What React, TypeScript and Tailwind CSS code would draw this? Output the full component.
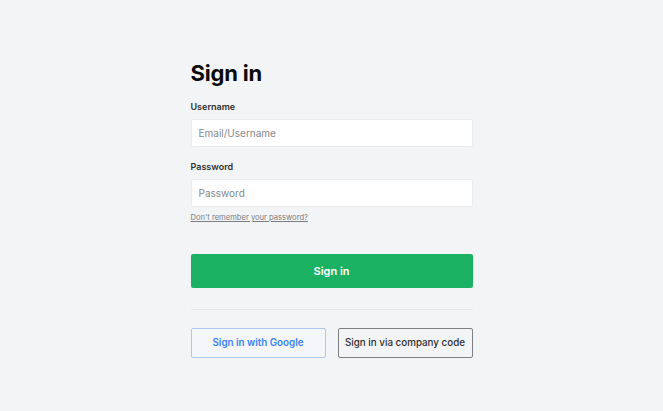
import React from "react";

export default function App() {
  return (
    <div
      className="w-[663px] h-[411px] bg-[#f3f4f6] flex justify-center"
      style={{ fontFamily: "Inter, 'Liberation Sans', sans-serif" }}
    >
      <div className="w-[282px] pt-[58px] flex flex-col">
        <h1 className="text-[22px] leading-[30px] font-bold text-[#0a0a0a] tracking-[-0.2px]">Sign in</h1>
        <label className="mt-[13px] text-[9px] leading-[11px] font-semibold text-[#2e2e2e]">Username</label>
        <input
          className="mt-[7px] h-[28px] bg-white border border-[#ebecee] rounded-[2px] px-[7px] text-[10px] text-[#333] placeholder:text-[#85888d] outline-none"
          placeholder="Email/Username"
        />
        <label className="mt-[14px] text-[9px] leading-[11px] font-semibold text-[#2e2e2e]">Password</label>
        <input
          type="password"
          className="mt-[7px] h-[28px] bg-white border border-[#ebecee] rounded-[2px] px-[7px] text-[10px] text-[#333] placeholder:text-[#85888d] outline-none"
          placeholder="Password"
        />
        <a className="mt-[6px] text-[7.6px] leading-[10px] text-[#7a7d82] underline self-start">
          Don't remember your password?
        </a>
        <button className="mt-[31px] h-[34px] bg-[#1bb163] rounded-[2px] text-white text-[11px] font-semibold">
          Sign in
        </button>
        <div className="mt-[21px] h-px bg-[#e5e7ea]" />
        <div className="mt-[18px] flex justify-between">
          <button className="w-[135px] h-[30px] border border-[#a9c8f2] rounded-[2px] text-[#3b82f6] text-[9.8px] font-semibold bg-[#f4f6f9] whitespace-nowrap">
            Sign in with Google
          </button>
          <button className="w-[135px] h-[30px] border border-[#7d7f83] rounded-[2px] text-[#2e2e2e] text-[9.8px] font-medium bg-[#f3f4f6] whitespace-nowrap">
            Sign in via company code
          </button>
        </div>
      </div>
    </div>
  );
}
